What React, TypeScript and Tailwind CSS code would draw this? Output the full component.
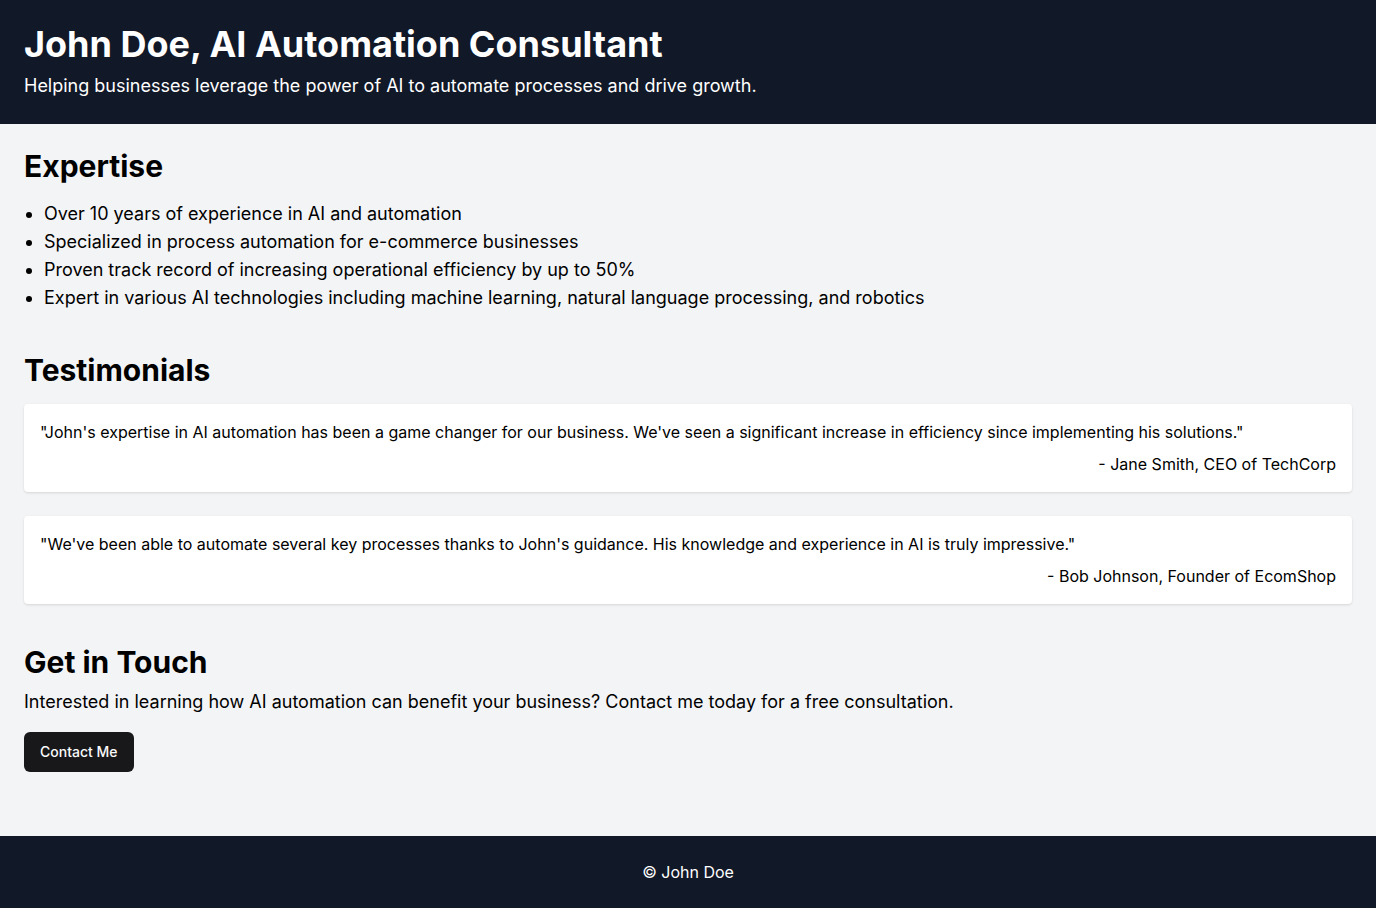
const expertise = [
  "Over 10 years of experience in AI and automation",
  "Specialized in process automation for e-commerce businesses",
  "Proven track record of increasing operational efficiency by up to 50%",
  "Expert in various AI technologies including machine learning, natural language processing, and robotics",
];

const testimonials = [
  {
    quote:
      "\"John's expertise in AI automation has been a game changer for our business. We've seen a significant increase in efficiency since implementing his solutions.\"",
    author: "- Jane Smith, CEO of TechCorp",
  },
  {
    quote:
      "\"We've been able to automate several key processes thanks to John's guidance. His knowledge and experience in AI is truly impressive.\"",
    author: "- Bob Johnson, Founder of EcomShop",
  },
];

export default function App() {
  return (
    <div className="flex min-h-screen flex-col bg-gray-100 font-['Inter',sans-serif] text-black">
      <header className="bg-[#111827] p-6 text-white">
        <h1 className="text-4xl font-bold">John Doe, AI Automation Consultant</h1>
        <p className="mt-2 text-lg">
          Helping businesses leverage the power of AI to automate processes and drive growth.
        </p>
      </header>
      <main className="flex-1 p-6">
        <section className="mb-10">
          <h2 className="text-3xl font-bold">Expertise</h2>
          <ul className="mt-4 list-disc pl-5 text-lg">
            {expertise.map((item) => (
              <li key={item}>{item}</li>
            ))}
          </ul>
        </section>
        <section className="mb-10">
          <h2 className="text-3xl font-bold">Testimonials</h2>
          <div className="mt-4 space-y-6">
            {testimonials.map(({ quote, author }) => (
              <blockquote key={author} className="rounded bg-white p-4 shadow">
                <p>{quote}</p>
                <footer className="mt-2 text-right">{author}</footer>
              </blockquote>
            ))}
          </div>
        </section>
        <section className="mb-10">
          <h2 className="text-3xl font-bold">Get in Touch</h2>
          <p className="mt-2 text-lg">
            Interested in learning how AI automation can benefit your business? Contact me today for a free consultation.
          </p>
          <button
            type="button"
            className="mt-4 inline-flex h-10 items-center justify-center rounded-md bg-[#18181b] px-4 py-2 text-sm font-medium text-[#fafafa]"
          >
            Contact Me
          </button>
        </section>
      </main>
      <footer className="bg-[#111827] p-6 text-center text-white">
        <p>© John Doe</p>
      </footer>
    </div>
  );
}
